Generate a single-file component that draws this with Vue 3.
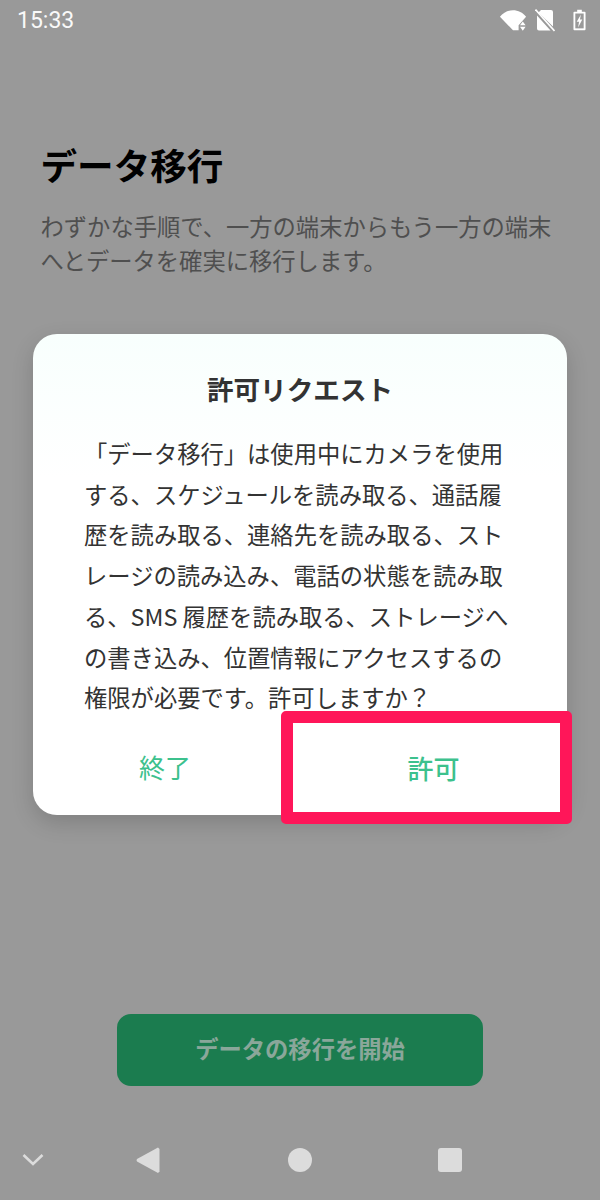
<script setup>
const bodyLines = [
  '「データ移行」は使用中にカメラを使用',
  'する、スケジュールを読み取る、通話履',
  '歴を読み取る、連絡先を読み取る、スト',
  'レージの読み込み、電話の状態を読み取',
  'る、SMS 履歴を読み取る、ストレージへ',
  'の書き込み、位置情報にアクセスするの',
  '権限が必要です。許可しますか？',
]
</script>

<template>
  <div class="page">
    <header class="status">
      <span class="time">15:33</span>
      <div class="status-icons">
        <svg class="wifi" width="28" height="24" viewBox="0 0 30 24">
          <path d="M1 8.500C4.500 4 9.500 1.500 15 1.500S25.500 4 29 8.500L21 17.500V23H20L15 23Z" fill="#fff" />
          <path d="M25.500 13.500l3 4h-6zM25.500 23.500l-3-4.200h6z" fill="#fff" />
        </svg>
        <svg class="sim" width="20" height="24" viewBox="0 0 20 24">
          <path d="M6 2H16a2 2 0 0 1 2 2V18.500L3.500 4.500ZM2 7.500L15.500 22.500H4a2 2 0 0 1-2-2Z" fill="#fff" />
          <path d="M0.500 1.500L19.500 23" stroke="#fff" stroke-width="1.600" />
        </svg>
        <svg class="battery" width="13" height="24" viewBox="0 0 14 24">
          <path d="M4.500 1H9.500V3H12.500A1 1 0 0 1 13.500 4V22A1 1 0 0 1 12.500 23H1.500A1 1 0 0 1 .5 22V4A1 1 0 0 1 1.500 3H4.500Z" fill="#fff" />
          <path d="M2.500 5H11.500V21H2.500Z" fill="#999" />
          <path d="M8.500 6L4 14H6.500L5.500 20L10 11.500H7.500Z" fill="#fff" />
        </svg>
      </div>
    </header>

    <main class="content">
      <h1 class="title">データ移行</h1>
      <p class="desc">わずかな手順で、一方の端末からもう一方の端末<br />へとデータを確実に移行します。</p>

      <section class="dialog">
        <h2 class="dialog-title">許可リクエスト</h2>
        <p class="dialog-body">
          <template v-for="line in bodyLines" :key="line">{{ line }}<br /></template>
        </p>
        <div class="actions">
          <button class="action">終了</button>
        </div>
        <button class="action allow">許可</button>
      </section>

      <div class="start-wrap">
        <button class="start">データの移行を開始</button>
      </div>
    </main>

    <nav class="nav">
      <svg class="chev" width="24" height="14" viewBox="0 0 24 14">
        <path d="M2.500 2L12 11L21.500 2" fill="none" stroke="#dcdcdc" stroke-width="2.600" />
      </svg>
      <svg class="back" width="24" height="28" viewBox="0 0 24 28">
        <path d="M22 1.500L23.500 3V25.500L22 27L1 15.500Q0 14 1 13Z" fill="#dcdcdc" />
      </svg>
      <span class="home"></span>
      <span class="recent"></span>
    </nav>
  </div>
</template>

<style>
html, body { margin: 0; background: #999; }
</style>

<style scoped>
.page {
  width: 600px;
  height: 1200px;
  background: #999;
  display: flex;
  flex-direction: column;
  overflow: hidden;
  font-family: "Noto Sans CJK JP", "Noto Sans", sans-serif;
}
.status {
  height: 40px;
  flex: none;
  display: flex;
  align-items: center;
  justify-content: space-between;
  padding: 0 14px 0 17px;
  box-sizing: border-box;
}
.time {
  font-family: Roboto, sans-serif;
  font-size: 23px;
  color: #fff;
  opacity: .95;
}
.status-icons { display: flex; align-items: center; }
.wifi { margin-right: 8px; }
.sim { margin-right: 18px; }
.content {
  flex: 1;
  display: flex;
  flex-direction: column;
  padding: 0 33px;
  min-height: 0;
}
.title {
  margin: 98px 0 0 7.500px;
  font-size: 36.600px;
  line-height: 54px;
  font-weight: 700;
  color: #000;
}
.desc {
  margin: 17px 0 0 7.500px;
  font-size: 23.300px;
  line-height: 34px;
  color: #4f4f4f;
  white-space: nowrap;
}
.dialog {
  position: relative;
  margin-top: 57px;
  height: 481px;
  box-sizing: border-box;
  background: linear-gradient(#f8fffd, #fff 30%);
  border-radius: 24px;
  box-shadow: 0 8px 22px rgba(0, 0, 0, .16);
  padding-top: 35px;
  display: flex;
  flex-direction: column;
}
.dialog-title {
  margin: 0;
  text-align: center;
  font-size: 26.600px;
  line-height: 40px;
  font-weight: 700;
  color: #333;
}
.dialog-body {
  margin: 24px 0 0 51px;
  font-size: 23.300px;
  line-height: 40.700px;
  color: #333;
  white-space: nowrap;
}
.actions {
  display: flex;
  margin-top: auto;
  height: 102px;
}
.action {
  border: 0;
  background: none;
  padding: 0;
  font: inherit;
  font-size: 26px;
  color: #3cc18d;
  flex: 0 0 264px;
}
.allow {
  position: absolute;
  left: 248px;
  top: 377px;
  width: 291px;
  height: 113px;
  box-sizing: border-box;
  padding-left: 14px;
  background: #fff;
  border: 12px solid #ff1659;
  border-radius: 5px;
  font-weight: 500;
}
.start-wrap {
  margin-top: auto;
  padding-bottom: 34px;
  display: flex;
  justify-content: center;
}
.start {
  width: 366px;
  height: 72px;
  border: 0;
  border-radius: 14px;
  background: #1b7c4f;
  color: #8aa79a;
  font: inherit;
  font-size: 23.300px;
  font-weight: 700;
  padding: 0 0 4px;
}
.nav {
  flex: none;
  height: 80px;
  position: relative;
  display: grid;
  grid-template-columns: 66px 164px 140px 160px;
  align-items: center;
  justify-items: center;
}
.home {
  width: 24px;
  height: 24px;
  border-radius: 50%;
  background: #dcdcdc;
}
.recent {
  width: 24px;
  height: 24px;
  border-radius: 3px;
  background: #dcdcdc;
}
</style>
